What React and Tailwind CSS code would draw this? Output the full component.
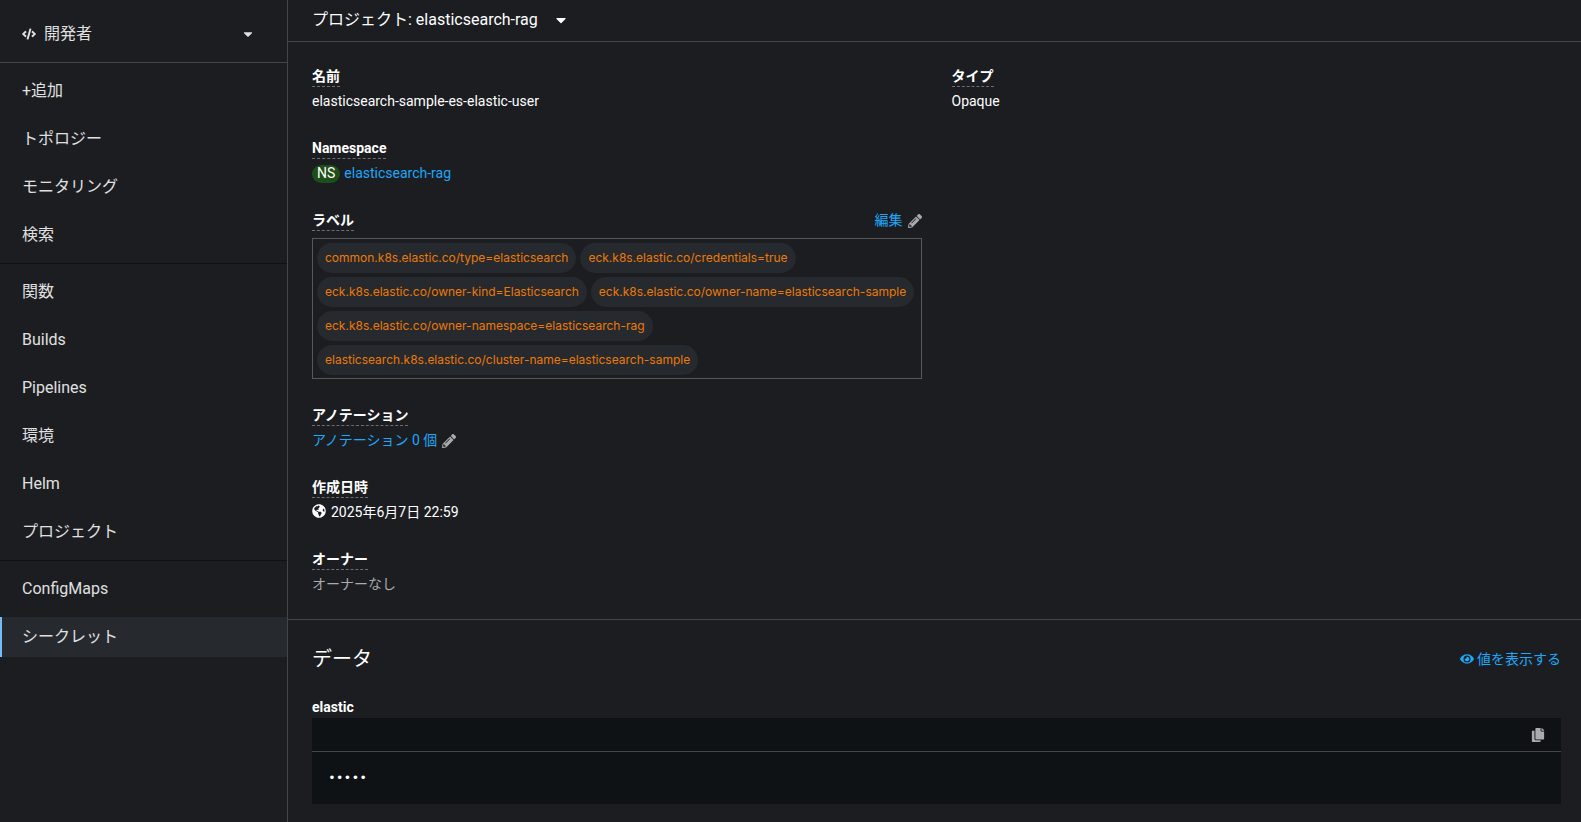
import { FaCaretDown, FaCode, FaCopy, FaEye, FaGlobeAmericas, FaPencilAlt } from 'react-icons/fa';

const NAV_SECTIONS = [
  ['+追加', 'トポロジー', 'モニタリング', '検索'],
  ['関数', 'Builds', 'Pipelines', '環境', 'Helm', 'プロジェクト'],
  ['ConfigMaps', 'シークレット'],
];

const LABELS = [
  'common.k8s.elastic.co/type=elasticsearch',
  'eck.k8s.elastic.co/credentials=true',
  'eck.k8s.elastic.co/owner-kind=Elasticsearch',
  'eck.k8s.elastic.co/owner-name=elasticsearch-sample',
  'eck.k8s.elastic.co/owner-namespace=elasticsearch-rag',
  'elasticsearch.k8s.elastic.co/cluster-name=elasticsearch-sample',
];

const Sidebar = ({ current }) => (
  <aside className="w-72 shrink-0 border-r border-[#444548] text-base text-[#e0e0e0]">
    <button className="w-full h-[63px] pt-1.5 pl-[22px] pr-8 flex items-center gap-2 border-b border-[#444548]">
      <FaCode className="w-3.5 h-3.5" />
      <span>開発者</span>
      <FaCaretDown className="w-3.5 h-3.5 ml-auto" />
    </button>
    <nav>
      {NAV_SECTIONS.map((items) => (
        <ul key={items[0]} className="py-2 flex flex-col gap-2 border-b border-[#0f1214] last:border-b-0">
          {items.map((item) => (
            <li key={item}>
              <a
                href="#"
                className={
                  item === current
                    ? 'h-10 pl-5 flex items-center border-l-2 border-[#73bcf7] bg-[#26292d]'
                    : 'h-10 pl-5 flex items-center border-l-2 border-transparent'
                }
              >
                {item}
              </a>
            </li>
          ))}
        </ul>
      ))}
    </nav>
  </aside>
);

const Term = ({ children }) => (
  <button className="h-[21px] flex items-center font-bold border-b border-dashed border-[#6a6e73]">
    {children}
  </button>
);

const Details = () => (
  <section className="grid grid-cols-2 gap-x-[30px] py-6 pl-6 pr-5 border-b border-[#444548]">
    <dl className="min-w-0 flex flex-col gap-[26px]">
      <div className="flex flex-col gap-1">
        <dt className="flex"><Term>名前</Term></dt>
        <dd>elasticsearch-sample-es-elastic-user</dd>
      </div>

      <div className="flex flex-col gap-1">
        <dt className="flex"><Term>Namespace</Term></dt>
        <dd className="flex items-center gap-1">
          <span className="h-[18px] px-[5px] flex items-center rounded-full bg-[#1e4f18]">NS</span>
          <a href="#" className="text-[#1fa7f8]">elasticsearch-rag</a>
        </dd>
      </div>

      <div className="flex flex-col gap-[7px]">
        <dt className="flex items-center justify-between">
          <Term>ラベル</Term>
          <button className="flex items-center gap-[5px] text-[#1fa7f8]">
            編集
            <FaPencilAlt className="w-3.5 h-3.5 text-[#aaabac]" />
          </button>
        </dt>
        <dd>
          <ul className="pt-1 px-1 pb-[3px] flex flex-wrap gap-1 border border-[#57585a]">
            {LABELS.map((label) => (
              <li key={label}>
                <a
                  href="#"
                  className="h-[30px] px-2 flex items-center rounded-full bg-[#26292d] font-['Inter',sans-serif] text-xs text-[#ec7a08]"
                >
                  {label}
                </a>
              </li>
            ))}
          </ul>
        </dd>
      </div>

      <div className="flex flex-col gap-1">
        <dt className="flex"><Term>アノテーション</Term></dt>
        <dd>
          <button className="flex items-center gap-[5px] text-[#1fa7f8]">
            アノテーション 0 個
            <FaPencilAlt className="w-3.5 h-3.5 text-[#aaabac]" />
          </button>
        </dd>
      </div>

      <div className="flex flex-col gap-1">
        <dt className="flex"><Term>作成日時</Term></dt>
        <dd className="flex items-center gap-[5px]">
          <FaGlobeAmericas className="w-3.5 h-3.5 mb-1" />
          2025年6月7日 22:59
        </dd>
      </div>

      <div className="flex flex-col gap-1">
        <dt className="flex"><Term>オーナー</Term></dt>
        <dd className="text-[#aaabac]">オーナーなし</dd>
      </div>
    </dl>

    <dl>
      <div className="flex flex-col gap-1">
        <dt className="flex"><Term>タイプ</Term></dt>
        <dd>Opaque</dd>
      </div>
    </dl>
  </section>
);

const SecretData = () => (
  <section className="pt-6 pl-6 pr-5">
    <div className="h-[30px] flex items-center justify-between">
      <h2 className="text-xl">データ</h2>
      <button className="flex items-center gap-[3px] text-[#1fa7f8]">
        <FaEye className="w-3.5 h-3.5" />
        値を表示する
      </button>
    </div>
    <dl className="mt-[23px]">
      <dt className="font-bold">elastic</dt>
      <dd className="bg-[#0f1214]">
        <div className="h-[34px] px-4 flex items-center justify-end border-b border-[#444548]">
          <button aria-label="コピー">
            <FaCopy className="w-3.5 h-3.5 text-[#aaabac]" />
          </button>
        </div>
        <pre className="h-[52px] px-4 flex items-center font-['Liberation_Mono',monospace] text-[13px]">•••••</pre>
      </dd>
    </dl>
  </section>
);

const App = () => (
  <div
    lang="ja"
    className="min-h-screen flex bg-[#1b1d21] text-white text-sm leading-[21px] font-['Roboto','Noto_Sans_CJK_JP',sans-serif]"
  >
    <Sidebar current="シークレット" />
    <main className="flex-1 min-w-0">
      <header className="h-[42px] pl-6 pb-0.5 flex items-center border-b border-[#444548]">
        <button className="flex items-center gap-[15px] text-base">
          プロジェクト: elasticsearch-rag
          <FaCaretDown className="w-4 h-4" />
        </button>
      </header>
      <Details />
      <SecretData />
    </main>
  </div>
);

export default App;
